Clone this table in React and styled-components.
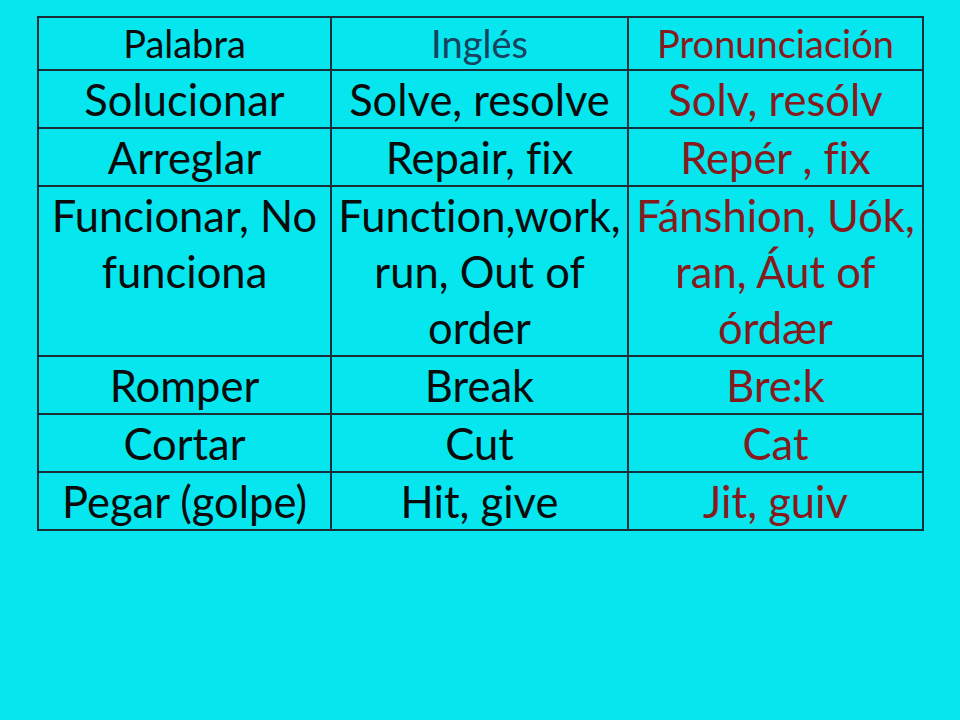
import React from 'react';
import styled, { createGlobalStyle } from 'styled-components';

//styles
const GlobalStyle = createGlobalStyle`
    html, body {
        margin: 0;
        background: #05e6ef;
    }
`;

const Page = styled.div`
    width: 960px;
    height: 720px;
    box-sizing: border-box;
    padding: 16px 0 0 37px;
    background: #05e6ef;
    font-family: Lato, "Open Sans", sans-serif;
    font-variant-ligatures: none;
`;

const Table = styled.table`
    border-collapse: collapse;
    table-layout: fixed;
    width: 885px;
`;

const Cell = styled.td`
    border: 2px solid #1b2d36;
    padding: 0;
    text-align: center;
    vertical-align: top;
    white-space: nowrap;
    font-size: ${({ head }) => head ? "38px" : "43.5px"};
    line-height: ${({ head }) => head ? "51px" : "56px"};
    color: ${({ tone }) => tone === "red" ? "#861a1c" : tone === "blue" ? "#174260" : "#0b0b0b"};
`;

const rows = [
    ["Solucionar", "Solve, resolve", "Solv, resólv"],
    ["Arreglar", "Repair, fix", "Repér , fix"],
    [
        ["Funcionar, No", "funciona"],
        ["Function,work,", "run, Out of", "order"],
        ["Fánshion, Uók,", "ran, Áut of", "órdær"],
    ],
    ["Romper", "Break", "Bre:k"],
    ["Cortar", "Cut", "Cat"],
    ["Pegar (golpe)", "Hit, give", "Jit, guiv"],
];

const Lines = ({ text }) => {
    if (!Array.isArray(text)) return text;
    return text.map((line, i) => (
        <React.Fragment key={i}>
            {i > 0 && <br />}
            {line}
        </React.Fragment>
    ));
};

const App = () => {
    return (
        <Page>
            <GlobalStyle />
            <Table>
                <colgroup>
                    <col style={{ width: "293px" }} />
                    <col style={{ width: "297px" }} />
                    <col style={{ width: "295px" }} />
                </colgroup>
                <tbody>
                    <tr>
                        <Cell head>Palabra</Cell>
                        <Cell head tone="blue">Inglés</Cell>
                        <Cell head tone="red">Pronunciación</Cell>
                    </tr>
                    {rows.map((row, i) => (
                        <tr key={i}>
                            <Cell><Lines text={row[0]} /></Cell>
                            <Cell><Lines text={row[1]} /></Cell>
                            <Cell tone="red"><Lines text={row[2]} /></Cell>
                        </tr>
                    ))}
                </tbody>
            </Table>
        </Page>
    );
};

export default App;
